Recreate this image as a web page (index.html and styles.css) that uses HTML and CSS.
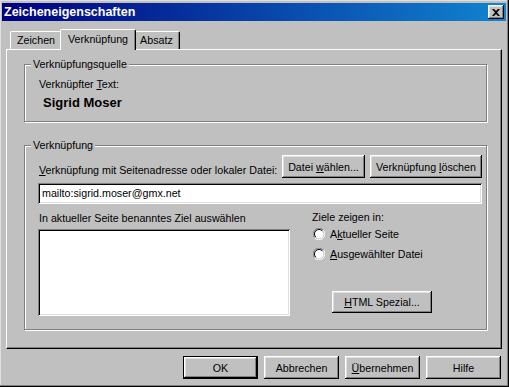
FILE: index.html
```html
<!DOCTYPE html>
<html lang="de">
<head>
    <meta charset="UTF-8">
    <title>Zeicheneigenschaften</title>
    <link rel="stylesheet" href="styles.css">
</head>
<body>
    <div class="window">
        <div class="titlebar">
            <span class="title">Zeicheneigenschaften</span>
            <span class="close">
                <svg width="8" height="7" viewBox="0 0 8 7"><path d="M0 0h2l2 2 2-2h2L5 3.5 8 7H6L4 5 2 7H0l3-3.5z" fill="#000"/></svg>
            </span>
        </div>

        <div class="tabs">
            <div class="tab">Zeichen</div>
            <div class="tab active">Verknüpfung</div>
            <div class="tab">Absatz</div>
        </div>

        <div class="panel">
            <div class="group source">
                <span class="group-title">Verknüpfungsquelle</span>
                <div class="label">Verknüpfter <u>T</u>ext:</div>
                <div class="linked">Sigrid Moser</div>
            </div>

            <div class="group link">
                <span class="group-title">Verknüpfung</span>
                <div class="address-row">
                    <span class="label address-label"><u>V</u>erknüpfung mit Seitenadresse oder lokaler Datei:</span>
                    <div class="address-buttons">
                        <button class="btn pick">Datei <u>w</u>ählen...</button>
                        <button class="btn clear">Verknüpfung <u>l</u>öschen</button>
                    </div>
                </div>
                <div class="field">mailto:sigrid.moser@gmx.net</div>

                <div class="target-row">
                    <div class="target-list">
                        <div class="label">In aktueller Seite benanntes Ziel auswählen</div>
                        <div class="listbox"></div>
                    </div>
                    <div class="target-options">
                        <div class="label">Ziele zeigen in:</div>
                        <div class="radio">
                            <svg width="12" height="12" viewBox="0 0 12 12">
                                <path d="M10.5 2.2A5.5 5.5 0 0 0 1.5 9.8" stroke="#808080" fill="none"/>
                                <path d="M1.5 9.8A5.5 5.5 0 0 0 10.5 2.2" stroke="#fff" fill="none"/>
                                <circle cx="6" cy="6" r="4.5" fill="#fff"/>
                                <path d="M9.2 2.8A4.5 4.5 0 0 0 2.8 9.2" stroke="#000" fill="none"/>
                            </svg>
                            <span>A<u>k</u>tueller Seite</span>
                        </div>
                        <div class="radio">
                            <svg width="12" height="12" viewBox="0 0 12 12">
                                <path d="M10.5 2.2A5.5 5.5 0 0 0 1.5 9.8" stroke="#808080" fill="none"/>
                                <path d="M1.5 9.8A5.5 5.5 0 0 0 10.5 2.2" stroke="#fff" fill="none"/>
                                <circle cx="6" cy="6" r="4.5" fill="#fff"/>
                                <path d="M9.2 2.8A4.5 4.5 0 0 0 2.8 9.2" stroke="#000" fill="none"/>
                            </svg>
                            <span><u>A</u>usgewählter Datei</span>
                        </div>
                        <button class="btn special"><u>H</u>TML Spezial...</button>
                    </div>
                </div>
            </div>
        </div>

        <div class="actions">
            <button class="btn default">OK</button>
            <button class="btn">Abbrechen</button>
            <button class="btn"><u>Ü</u>bernehmen</button>
            <button class="btn">Hilfe</button>
        </div>
    </div>
</body>
</html>
```

FILE: styles.css
```css
body {
    margin: 0;
    font-family: "Liberation Sans", Arial, sans-serif;
    font-size: 10.7px;
    color: #000;
    background-color: #c0c0c0;
}
.window {
    width: 509px;
    height: 387px;
    box-sizing: border-box;
    padding: 3px 3px 0 2px;
    background-color: #c0c0c0;
    box-shadow: inset -1px -1px 0 #000, inset -2px -2px 0 #808080, inset 1px 1px 0 #dfdfdf;
}
.titlebar {
    height: 18px;
    display: flex;
    align-items: center;
    justify-content: space-between;
    padding: 0 2px;
    background: linear-gradient(to right, #000080, #1084d0);
    color: #fff;
    font-weight: bold;
    font-size: 12.5px;
}
.close {
    width: 16px;
    height: 14px;
    box-sizing: border-box;
    display: flex;
    align-items: center;
    justify-content: center;
    background-color: #c0c0c0;
    box-shadow: inset -1px -1px 0 #000, inset 1px 1px 0 #fff, inset -2px -2px 0 #808080, inset 2px 2px 0 #dfdfdf;
}

/* tabs */
.tabs {
    display: flex;
    align-items: flex-end;
    height: 20px;
    margin: 8px 0 0 8px;
}
.tab {
    height: 18px;
    box-sizing: border-box;
    padding: 0 6px;
    line-height: 17px;
    border: 1px solid #fff;
    border-right-color: #000;
    border-bottom: none;
    border-radius: 2px 2px 0 0;
    box-shadow: inset -1px 0 0 #808080;
    background-color: #c0c0c0;
}
.tab.active {
    height: 21px;
    margin: 0 -2px -1px;
    padding: 0 7px;
    line-height: 18px;
    position: relative;
    z-index: 1;
}
.tab.active + .tab {
    border-left: none;
}

.panel {
    height: 300px;
    box-sizing: border-box;
    margin: 0 4px;
    padding: 14px 14px 0 17px;
    border: 1px solid #fff;
    border-right-color: #000;
    border-bottom-color: #000;
    box-shadow: inset -1px -1px 0 #808080;
}

/* groups */
.group {
    position: relative;
    box-sizing: border-box;
    border: 1px solid #808080;
    box-shadow: inset 1px 1px 0 #fff, 1px 1px 0 #fff;
}
.group-title {
    position: absolute;
    top: -7px;
    left: 6px;
    padding: 0 2px;
    line-height: 13px;
    background-color: #c0c0c0;
}
.label {
    line-height: 13px;
    white-space: nowrap;
}
.source {
    height: 58px;
    padding: 13px 0 0 14px;
}
.linked {
    margin: 4px 0 0 4px;
    font-size: 13px;
    font-weight: bold;
    line-height: 16px;
}
.link {
    height: 185px;
    margin-top: 23px;
    padding: 9px 4px 0 13px;
}

/* address row */
.address-row {
    display: flex;
    align-items: flex-end;
    justify-content: space-between;
}
.address-label {
    margin: 0 0 1px 1px;
}
.address-buttons {
    display: flex;
    flex-shrink: 0;
    gap: 5px;
}
.btn {
    height: 23px;
    box-sizing: border-box;
    padding: 0 4px;
    border: none;
    white-space: nowrap;
    background-color: #c0c0c0;
    font-family: inherit;
    font-size: 10.7px;
    color: #000;
    box-shadow: inset -1px -1px 0 #000, inset 1px 1px 0 #fff, inset -2px -2px 0 #808080, inset 2px 2px 0 #dfdfdf;
}
.pick {
    width: 83px;
}
.clear {
    width: 112px;
}
.field {
    height: 21px;
    box-sizing: border-box;
    margin-top: 5px;
    padding: 0 4px;
    line-height: 21px;
    background-color: #fff;
    box-shadow: inset 1px 1px 0 #808080, inset -1px -1px 0 #fff, inset 2px 2px 0 #000, inset -2px -2px 0 #dfdfdf;
}

/* target row */
.target-row {
    display: flex;
    gap: 22px;
    margin-top: 8px;
}
.target-list .label {
    margin-left: 1px;
}
.listbox {
    width: 252px;
    height: 87px;
    box-sizing: border-box;
    margin-top: 4px;
    background-color: #fff;
    box-shadow: inset 1px 1px 0 #808080, inset -1px -1px 0 #fff, inset 2px 2px 0 #000, inset -2px -2px 0 #dfdfdf;
}
.target-options {
    display: flex;
    flex-direction: column;
    align-items: flex-start;
}
.target-options .label {
    margin-top: -1px;
}
.radio {
    display: flex;
    align-items: center;
    gap: 5px;
    height: 20px;
    margin-left: 1px;
}
.radio:first-of-type {
    margin-top: 3px;
}
.special {
    width: 100px;
    height: 22px;
    margin: 27px 0 0 20px;
}

/* bottom buttons */
.actions {
    display: flex;
    justify-content: flex-end;
    gap: 6px;
    margin: 7px 5px 0 0;
}
.actions .btn {
    width: 75px;
}
.btn.default {
    box-shadow: inset 0 0 0 1px #000, inset -2px -2px 0 #000, inset 2px 2px 0 #fff, inset -3px -3px 0 #808080, inset 3px 3px 0 #dfdfdf;
}
```
